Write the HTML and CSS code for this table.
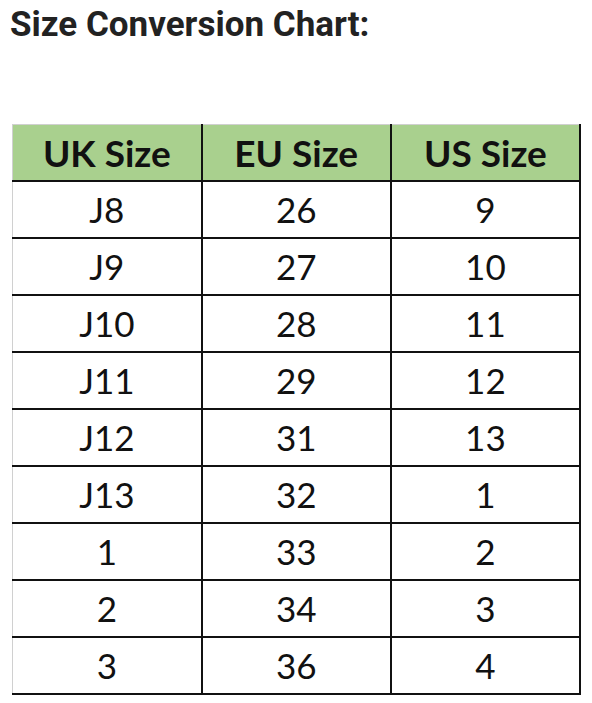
FILE: index.html
```html
<!DOCTYPE html>
<html>
<head>
<meta charset="utf-8">
<link rel="stylesheet" href="styles.css">
</head>
<body>
<h2 class="title">Size Conversion Chart:</h2>
<table class="chart">
<thead>
<tr><th>UK Size</th><th>EU Size</th><th>US Size</th></tr>
</thead>
<tbody>
<tr><td>J8</td><td>26</td><td>9</td></tr>
<tr><td>J9</td><td>27</td><td>10</td></tr>
<tr><td>J10</td><td>28</td><td>11</td></tr>
<tr><td>J11</td><td>29</td><td>12</td></tr>
<tr><td>J12</td><td>31</td><td>13</td></tr>
<tr><td>J13</td><td>32</td><td>1</td></tr>
<tr><td>1</td><td>33</td><td>2</td></tr>
<tr><td>2</td><td>34</td><td>3</td></tr>
<tr><td>3</td><td>36</td><td>4</td></tr>
</tbody>
</table>
</body>
</html>
```
FILE: styles.css
```css
html, body {
  margin: 0;
  padding: 0;
  background: #fff;
}
.title {
  margin: 0;
  padding: 4px 0 0 10px;
  font-family: Roboto, "Liberation Sans", sans-serif;
  font-weight: 700;
  font-size: 35px;
  line-height: 42px;
  color: #222;
}
.chart {
  margin: 78px 0 0 12px;
  width: 569px;
  border-collapse: collapse;
  table-layout: fixed;
  font-family: Lato, "Liberation Sans", sans-serif;
  color: #111;
}
.chart th, .chart td {
  height: 55px;
  padding: 0;
  text-align: center;
  vertical-align: middle;
  border: 2px solid #111;
  font-size: 35px;
  line-height: 1;
}
.chart th {
  background: #a9d08e;
  font-weight: 700;
  font-size: 37px;
  border-top: 1px solid #d0d0d0;
}
.chart td {
  font-weight: 400;
}
.chart th:first-child, .chart td:first-child {
  border-left: 1px solid #d0d0d0;
}
```
